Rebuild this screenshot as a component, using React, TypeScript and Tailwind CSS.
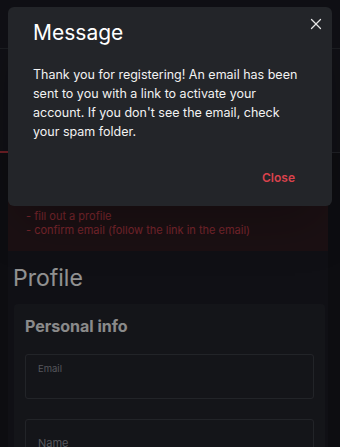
import { X } from 'lucide-react'

const font = { fontFamily: 'Inter, "Noto Sans", sans-serif' }

function Field({ label, filled }: { label: string; filled?: boolean }) {
  return (
    <div
      className={
        filled
          ? 'h-[45px] rounded-[3px] border border-[#3a3c44] px-3 pt-[8px]'
          : 'h-[45px] rounded-[3px] border border-[#3a3c44] px-3 pt-[16px]'
      }
    >
      <span
        className={
          filled
            ? 'block text-[9.5px] leading-[12px] text-[#8e9098]'
            : 'block text-[11px] leading-[14px] text-[#8e9098]'
        }
      >
        {label}
      </span>
    </div>
  )
}

export default function App() {
  return (
    <div className="relative h-[447px] w-[340px] overflow-hidden bg-[#16171d]" style={font}>
      {/* page under the modal */}
      <div className="h-[49px] border-b border-[#30323a] bg-[#1b1c23]" />
      <div className="relative h-[104px] border-b border-[#34363e] bg-[#1b1c23]">
        <div className="absolute bottom-[-1px] left-0 h-[2px] w-[90px] bg-[#b0333c]" />
      </div>
      <div className="ml-[8px] mr-[12px] flex flex-col bg-[#1b1c23] pb-10">
        <div className="mt-[42px] h-[56px] bg-[#2e1c21] px-[18px] pt-[14px] text-[11px] leading-[14px] text-[#c33e49]">
          <div>- fill out a profile</div>
          <div>- confirm email (follow the link in the email)</div>
        </div>
        <h1 className="mt-[12px] px-[5px] text-[23px] leading-[30px] font-normal text-[#f2f2f2]">Profile</h1>
        <div className="ml-[6px] mr-[3px] mt-[11px] rounded bg-[#22232b] px-[11px] pt-[10px] pb-6">
          <h2 className="text-[16px] leading-[24px] font-bold text-[#e6e6e6]">Personal info</h2>
          <div className="mt-[16px] flex flex-col gap-[20px]">
            <Field label="Email" filled />
            <Field label="Name" />
          </div>
        </div>
      </div>

      {/* overlay */}
      <div className="absolute inset-0 bg-black/40" />

      {/* dialog */}
      <div className="absolute left-[8px] top-[7px] h-[199px] w-[324px] rounded-md bg-[#232529] px-[25px] shadow-2xl">
        <button className="absolute right-[6px] top-[7px] p-[1px] text-[#e6e6e6]">
          <X className="h-[18px] w-[18px]" strokeWidth={1.7} />
        </button>
        <h3 className="mt-[12px] text-[21px] leading-[28px] font-normal text-white">Message</h3>
        <p className="mt-[18px] text-[12.5px] leading-[19px] text-[#f2f2f2]">
          Thank you for registering! An email has been sent to you with a link to activate your account. If you don't see the email, check your spam folder.
        </p>
        <div className="mt-[28px] flex justify-end pr-[12px]">
          <button className="text-[12px] font-semibold text-[#d9424c]">Close</button>
        </div>
      </div>
    </div>
  )
}
